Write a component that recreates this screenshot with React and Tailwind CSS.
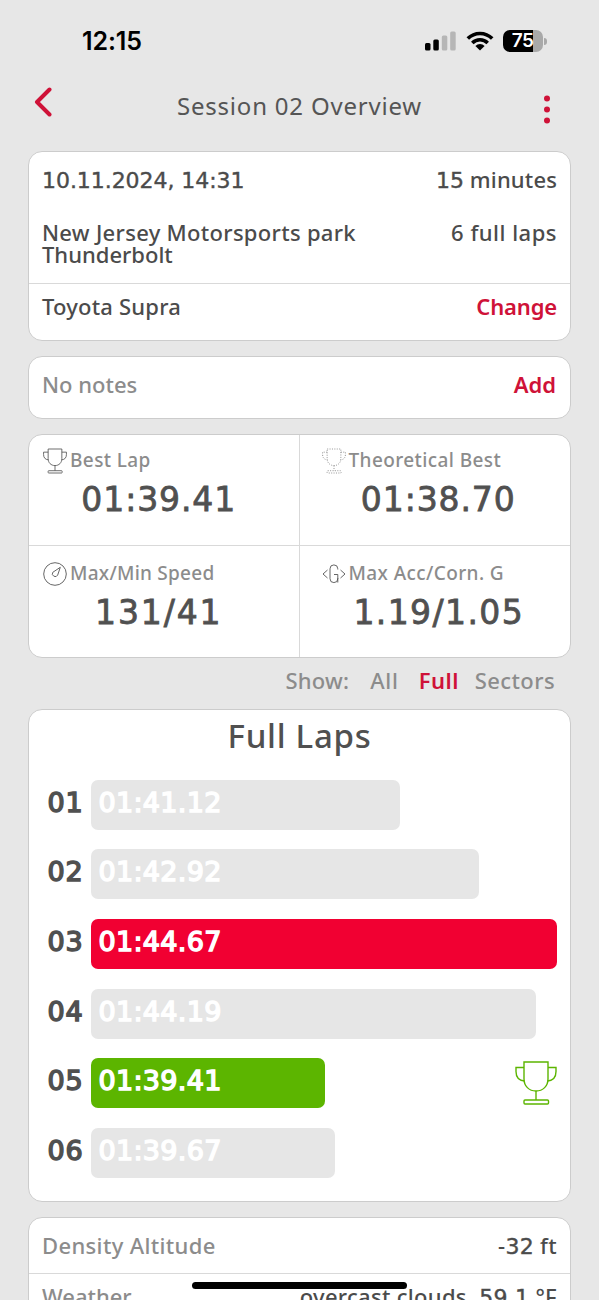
import React from "react";
import clsx from "clsx";

const laps = [
  { id: "01", time: "01:41.12", width: 309 },
  { id: "02", time: "01:42.92", width: 388 },
  { id: "03", time: "01:44.67", width: 466, kind: "worst" },
  { id: "04", time: "01:44.19", width: 445.5 },
  { id: "05", time: "01:39.41", width: 234, kind: "best" },
  { id: "06", time: "01:39.67", width: 244.5 },
];

const Digits = ({ className, children }) => (
  <span className={clsx("font-['DejaVu_Sans',sans-serif] font-normal", className)}>{children}</span>
);

const Card = ({ className, children }) => (
  <section className={clsx("rounded-[14px] border border-[#cccccc] bg-white", className)}>
    {children}
  </section>
);

const Trophy = ({ className, strokeWidth = 1, dashed }) => (
  <svg
    viewBox="0 0 42 44"
    className={className}
    fill="none"
    stroke="currentColor"
    strokeWidth={strokeWidth}
    strokeDasharray={dashed ? "1.8 2.4" : undefined}
  >
    <path d="M9 1h24v17c0 7-5 12-12 12S9 25 9 18z" />
    <path d="M9 6.500H1v4c0 6 3 9 8.500 9.500M33 6.500h8v4c0 6-3 9-8.500 9.500" />
    <path d="M21 30v9" />
    <rect x="9" y="39" width="24.500" height="4" rx="1" />
  </svg>
);

const Gauge = () => (
  <svg viewBox="0 0 24 24" className="size-6" fill="none" stroke="#555" strokeWidth="0.9">
    <circle cx="12" cy="12" r="11.300" />
    <path d="M17.300 5.300 14.700 13a2.800 2.800 0 1 1-4.900-2.700z" strokeLinejoin="round" />
  </svg>
);

const GForce = () => (
  <svg viewBox="0 0 24 24" className="size-6" fill="none" stroke="#555" strokeWidth="0.9">
    <path d="M5.500 8 1 12l4.500 4M18.500 8 23 12l-4.500 4" />
    <path d="M15.800 7.500V6.800a3.900 3.900 0 0 0-7.800 0v9.900a3.900 3.900 0 0 0 7.800 0v-4.200H12M15.800 16v4.500" />
  </svg>
);

const StatusBar = () => (
  <div className="flex h-[82px] items-center justify-between pl-[82px] pr-[52px]">
    <span className="font-['Inter',sans-serif] text-[25px] font-semibold leading-6 tracking-[-0.1px] text-black">
      12:15
    </span>
    <div className="flex items-center">
      <svg viewBox="0 0 31 20" className="h-5 w-[31px]">
        <rect x="0" y="12" width="5.500" height="7.500" rx="1.500" />
        <rect x="8.300" y="8.500" width="5.500" height="11" rx="1.500" />
        <rect x="16.800" y="4.500" width="5.500" height="15" rx="1.500" fill="#b6b6b6" />
        <rect x="25.200" y="0.500" width="5.500" height="19" rx="1.500" fill="#b6b6b6" />
      </svg>
      <svg viewBox="0 0 28 20" className="ml-[10px] h-5 w-7" fill="none" stroke="#000" strokeWidth="3.600">
        <path d="M1.800 7.500a17.300 17.300 0 0 1 24.400 0" />
        <path d="M6.300 12a10.900 10.900 0 0 1 15.400 0" />
        <path d="M14 19.500l-4.600-4.600a6.500 6.500 0 0 1 9.200 0z" fill="#000" stroke="none" />
      </svg>
      <div className="ml-[9px] flex h-[22px] w-10 items-center justify-center rounded-[7px] bg-[linear-gradient(90deg,#000_75%,#a9a9a9_75%)] pr-px font-['Inter',sans-serif] text-[19px] font-semibold tracking-[-0.5px] text-white">
        75
      </div>
      <div className="ml-px h-[7px] w-[3px] rounded-r-full bg-[#a9a9a9]" />
    </div>
  </div>
);

const Stat = ({ icon, label, value, className, labelClass, valueClass }) => (
  <div className={className}>
    <div className="flex h-6 items-center">
      {icon}
      <span className={clsx("ml-[3px] whitespace-nowrap text-[19px] leading-6 text-[#8c8c8c]", labelClass)}>
        {label}
      </span>
    </div>
    <div className={clsx("text-center", valueClass)}>
      <Digits className="block text-[33px] leading-[34px] text-[#505050] [-webkit-text-stroke:0.8px_#505050]">
        {value}
      </Digits>
    </div>
  </div>
);

export default function App() {
  return (
    <div className="relative h-[1300px] w-[599px] overflow-hidden bg-[#e7e7e7] font-['Noto_Sans',sans-serif] text-[22px] font-medium leading-[22px] tracking-[0.3px] text-[#4b4b4b]">
      <StatusBar />

      <header className="flex h-[69px] items-start justify-between pl-[34px] pr-12">
        <svg viewBox="0 0 18 30" className="mt-[5px] h-[30px] w-[18px]" fill="none" stroke="#cf1238" strokeWidth="4" strokeLinecap="round">
          <path d="M15.500 2.500 3 15l12.500 12.500" strokeLinejoin="round" />
        </svg>
        <h1 className="ml-1 mt-3 text-[24px] font-normal leading-6 tracking-[0.8px] text-[#555]">
          Session 02 Overview
        </h1>
        <svg viewBox="0 0 8 30" className="mt-3 h-[30px] w-2" fill="#cf1238">
          <circle cx="4" cy="4.500" r="3" />
          <circle cx="4" cy="15.500" r="3" />
          <circle cx="4" cy="26.500" r="3" />
        </svg>
      </header>

      <main className="mx-7">
        <Card className="h-[190px]">
          <div className="mt-4 flex h-[22px] items-baseline justify-between px-[13px]">
            <Digits className="tracking-[-0.05px] [-webkit-text-stroke:0.4px_#4b4b4b]">10.11.2024, 14:31</Digits>
            <span className="tracking-[0.15px]">
              <Digits className="tracking-[0px] [-webkit-text-stroke:0.4px_#4b4b4b]">15</Digits> minutes
            </span>
          </div>
          <div className="mt-[31px] flex justify-between px-[13px] pb-[18px]">
            <span>
              New Jersey Motorsports park
              <br />
              <span className="tracking-[0px]">Thunderbolt</span>
            </span>
            <span className="tracking-[0.5px]">6 full laps</span>
          </div>
          <div className="flex justify-between border-t border-[#d9d9d9] px-[13px] pt-[11px]">
            <span className="tracking-[0.2px]">Toyota Supra</span>
            <span className="font-semibold tracking-[-0.15px] text-[#cf1238]">Change</span>
          </div>
        </Card>

        <Card className="mt-[15px] flex h-[63px] justify-between px-[13px] pt-4">
          <span className="tracking-[0px] text-[#8c8c8c]">No notes</span>
          <span className="pr-px font-semibold tracking-[0px] text-[#cf1238]">Add</span>
        </Card>

        <Card className="mt-[15px] grid h-[224px] grid-cols-2 grid-rows-[110px_1fr]">
          <Stat
            className="border-r border-[#d9d9d9] pl-[14px] pt-[14px]"
            icon={<Trophy className="h-[26px] w-6 text-[#555]" strokeWidth={1.5} />}
            label="Best Lap"
            value="01:39.41"
            labelClass="-mt-0.5 tracking-[0.4px]"
            valueClass="mt-[10px] pr-6 tracking-[0.9px]"
          />
          <Stat
            className="pl-[22px] pt-[14px]"
            icon={<Trophy className="h-[26px] w-6 text-[#888]" strokeWidth={1.5} dashed />}
            label="Theoretical Best"
            value="01:38.70"
            labelClass="-mt-0.5 tracking-[0.4px]"
            valueClass="mt-[10px] pr-[15px] tracking-[0.9px]"
          />
          <Stat
            className="border-r border-t border-[#d9d9d9] pl-[14px] pt-4"
            icon={<Gauge />}
            label="Max/Min Speed"
            value="131/41"
            labelClass="-mt-0.5 tracking-[0.25px]"
            valueClass="mt-[10px] pr-6 tracking-[1.9px]"
          />
          <Stat
            className="border-t border-[#d9d9d9] pl-[22px] pt-4"
            icon={<GForce />}
            label="Max Acc/Corn. G"
            value="1.19/1.05"
            labelClass="-mt-0.5 tracking-[0.4px]"
            valueClass="mt-[10px] pr-[14px] tracking-[1.4px]"
          />
        </Card>

        <nav className="flex h-[51px] items-start justify-end pr-4 pt-[11px] tracking-[0.4px] text-[#8c8c8c]">
          <span className="tracking-[0.2px]">Show:</span>
          <span className="ml-[21px] tracking-[0.8px]">All</span>
          <span className="ml-5 font-semibold text-[#cf1238]">Full</span>
          <span className="ml-4">Sectors</span>
        </nav>

        <Card className="h-[493px]">
          <h2 className="mt-[9px] text-center text-[33px] font-medium leading-[34px] tracking-[0.7px] text-[#505050]">
            Full Laps
          </h2>
          <div className="mt-[26.5px] flex flex-col gap-[19.7px]">
            {laps.map((lap) => (
              <div key={lap.id} className="flex h-[50px] items-center">
                <Digits className="-mt-1 w-[54.5px] text-right text-[27px] leading-[50px] tracking-[0.8px] text-[#505050] [-webkit-text-stroke:1.5px_#505050]">
                  {lap.id}
                </Digits>
                <div
                  style={{ width: lap.width }}
                  className={clsx(
                    "ml-[7px] h-[50px] shrink-0 rounded-[7px] pl-2",
                    lap.kind === "worst" && "bg-[#f10032]",
                    lap.kind === "best" && "bg-[#5cb500]",
                    !lap.kind && "bg-[#e6e6e6]"
                  )}
                >
                  <Digits className="block text-[27px] leading-[46px] tracking-[0.3px] text-white [-webkit-text-stroke:1.5px_#fff]">
                    {lap.time}
                  </Digits>
                </div>
                {lap.kind === "best" && (
                  <Trophy className="ml-auto mr-[13px] h-11 w-[42px] text-[#5cb500]" strokeWidth={1.4} />
                )}
              </div>
            ))}
          </div>
        </Card>

        <Card className="mt-[15px] h-[140px]">
          <div className="flex h-[55px] items-baseline justify-between px-[13px] pt-4">
            <span className="tracking-[0.35px] text-[#8c8c8c]">Density Altitude</span>
            <span>
              -<Digits className="[-webkit-text-stroke:0.4px_#4b4b4b]">32</Digits> ft
            </span>
          </div>
          <div className="flex items-baseline justify-between border-t border-[#d9d9d9] px-[13px] pt-[11px]">
            <span className="tracking-[0px] text-[#8c8c8c]">Weather</span>
            <span>
              overcast clouds, <Digits className="[-webkit-text-stroke:0.4px_#4b4b4b]">59.1</Digits> °F
            </span>
          </div>
        </Card>
      </main>

      {/* home indicator */}
      <div className="absolute left-48 top-[1282px] h-[7px] w-[215px] rounded-full bg-black" />
    </div>
  );
}
